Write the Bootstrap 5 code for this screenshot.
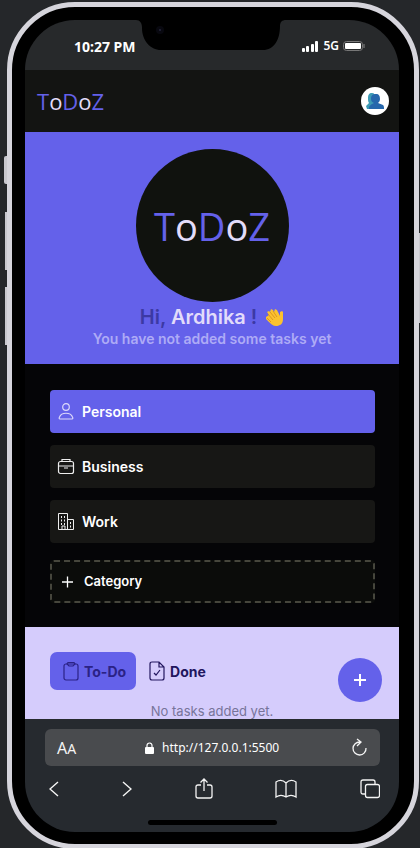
<!DOCTYPE html>
<html lang="en">
<head>
<meta charset="utf-8">
<meta name="viewport" content="width=device-width, initial-scale=1">
<title>ToDoZ</title>
<link href="https://cdn.jsdelivr.net/npm/bootstrap@5.3.0/dist/css/bootstrap.min.css" rel="stylesheet">
<style>
  :root { --violet: #6461ea; --paper: #d5ccfc; --ink: #22165e; --ui: Inter, "Noto Sans", sans-serif; --sys: "Noto Sans", sans-serif; }
  body { background: #25272a; font-family: var(--ui); padding: 2px 1px 0 7px; }
  .phone { border: 5px solid #d6d5dc; border-radius: 68px; background: #000; padding: 13px 15px 12px 13px; }
  .side-key { position: absolute; left: -7px; width: 2px; height: 58px; background: #c9c8ce; }
  .key-mute { top: 149px; left: -8px; width: 3px; height: 28px; border-radius: 2px 0 0 2px; }
  .key-up { top: 205px; }
  .key-down { top: 280px; }
  .key-power { top: 226px; left: auto; right: -6px; width: 1px; height: 90px; }
  .screen { border-radius: 50px; overflow: hidden; background: #050507; }
  .status { height: 50px; background: #27292b; color: #fff; font-family: var(--sys); padding: 2px 34px 0 49px; font-size: 14px; }
  .carrier { font-size: 12px; }
  .notch { position: absolute; top: 0; left: 111px; }
  .top-head { height: 62px; background: #131412; padding: 0 10px 0 12px; }
  .wordmark { font-family: "Open Sans", sans-serif; font-weight: 400; color: var(--violet); line-height: 1; }
  .wordmark span { color: #e2dcfa; }
  .word-sm { font-size: 22px; }
  .word-lg { font-size: 38px; }
  .avatar { width: 28px; height: 28px; }
  .hero { background: var(--violet); height: 232px; padding-top: 17px; }
  .disc { width: 153px; height: 153px; background: #10120e; }
  .greet { font-size: 20px; line-height: 24px; font-weight: 600; color: #3c39a4; margin-top: 3px; }
  .greet b { color: #e2dcfa; font-weight: 600; }
  .hero-note { font-size: 14px; line-height: 19px; font-weight: 600; color: #aeabf6; }
  .groups { padding: 26px 24px 24px 25px; }
  .group-btn { height: 43px; background: #171715; color: #fff; border: 0; border-radius: 4px; font-size: 14px; font-weight: 600; padding: 0 7px; gap: 6px; margin-bottom: 12px; }
  .group-btn.on { background: var(--violet); }
  .group-add { background: #0b0c0a; border: 2px dashed #46463c; font-size: 13px; padding: 0 6px; gap: 6px; margin: 17px 0 0; }
  .tasks { background: var(--paper); height: 92px; padding: 25px 17px 0 25px; overflow: hidden; }
  .tab-btn { height: 38px; border: 0; border-radius: 7px; background: none; color: var(--ink); font-size: 14px; font-weight: 700; padding: 0 10px 0 12px; gap: 4px; }
  .tab-btn.on { background: var(--violet); color: #2b2285; }
  .fab { width: 44px; height: 44px; margin-top: 6px; background: var(--violet); border: 0; }
  .empty-note { font-size: 13px; line-height: 18px; color: #77749a; padding-right: 8px; }
  .browser { background: #262a2f; padding: 10px 19px 7px 20px; color: #f4f4f4; font-family: var(--sys); }
  .address { height: 37px; background: #494b4e; border-radius: 6px; padding: 0 12px; }
  .url { font-size: 12px; width: 120px; color: #fff; background: none; border: 0; outline: 0; padding: 0; }
  .plain-btn { background: none; border: 0; padding: 0; color: inherit; line-height: 1; }
  .home-bar { width: 129px; height: 5px; background: #000; border-radius: 3px; }
  svg { display: block; flex: none; }
</style>
<script src="https://cdn.jsdelivr.net/npm/bootstrap@5.3.0/dist/js/bootstrap.bundle.min.js"></script>
</head>
<body>
<div class="phone position-relative">
  <i class="side-key key-mute"></i><i class="side-key key-up"></i><i class="side-key key-down"></i><i class="side-key key-power"></i>
  <div class="screen">
    <div class="status position-relative d-flex align-items-center justify-content-between">
      <svg class="notch" width="150" height="30" viewBox="0 0 150 30"><path d="M0 0h150c-4 0-6 2-6 6 0 14-6 24-17 24H25C14 30 6 20 6 8 6 3 4 0 0 0Z"/><circle cx="24" cy="10" r="4" fill="#08080f"/><circle cx="24" cy="10" r="1" fill="#25253c"/></svg>
      <strong>10:27 PM</strong>
      <div class="d-flex align-items-center gap-1">
        <svg width="17" height="11" viewBox="0 0 17 11" fill="#fff"><rect y="7" width="3" height="4" rx="1"/><rect x="4" y="5" width="3" height="6" rx="1"/><rect x="9" y="3" width="3" height="8" rx="1"/><rect x="13" width="3" height="11" rx="1"/></svg>
        <span class="carrier fw-semibold">5G</span>
        <svg width="22" height="10" viewBox="0 0 22 10"><rect x=".5" y=".5" width="19" height="9" rx="3" fill="none" stroke="#777"/><rect x="2" y="2" width="16" height="6" rx="1" fill="#fff"/><path d="M21 3v4" stroke="#888"/></svg>
      </div>
    </div>
    <header class="top-head d-flex align-items-center justify-content-between">
      <div class="wordmark word-sm">T<span>o</span>D<span>o</span>Z</div>
      <button class="plain-btn avatar rounded-circle bg-white d-flex align-items-center justify-content-center" aria-label="Account">
        <svg width="18" height="17" viewBox="0 0 18 17"><path d="M2 5c0-3 1-5 4-5 2 0 4 2 4 5s-1 4-2 5l2 2v4H1l-1-3 3-3C2 9 2 7 2 5Z" fill="#3d9bb4"/><path d="M5 6c0-4 2-5 5-5s4 2 4 5c0 2-1 3-2 4l5 2c1 1 1 2 1 4H3c0-3 1-4 5-6-2-1-3-2-3-4Z" fill="#2667ac"/></svg>
      </button>
    </header>
    <section class="hero text-center">
      <div class="disc rounded-circle mx-auto d-flex align-items-center justify-content-center"><div class="wordmark word-lg">T<span>o</span>D<span>o</span>Z</div></div>
      <div class="greet d-flex justify-content-center align-items-center"><span>Hi, <b>Ardhika</b> !</span>
        <svg class="ms-2" width="19" height="20" viewBox="0 0 19 20"><path d="M1 10 4 8 2 5l2-1 1 1 1-3 2 1 1 2 1-3 2 1 3 6V5l2-1 1 1v7c0 5-3 7-7 7-3 0-5-2-7-4L1 12Z" fill="#fbc22f"/><path d="m3 7 5 6M5 5l5 6m-2-7 4 6M2 11l4 4" stroke="#d58a20" stroke-width=".8"/></svg>
      </div>
      <div class="hero-note">You have not added some tasks yet</div>
    </section>
    <section class="groups">
      <button class="group-btn on w-100 d-flex align-items-center">
        <svg width="19" height="19" viewBox="0 0 19 19" fill="none" stroke="#dcd8fa" stroke-width="1.2"><circle cx="9" cy="5" r="3.300"/><path d="M3 17c-1 0-1-1-.5-2 2-5 11-5 13 0 .5 1 .5 2-.5 2Z"/></svg>Personal</button>
      <button class="group-btn w-100 d-flex align-items-center">
        <svg width="19" height="19" viewBox="0 0 19 19" fill="none" stroke="#eee" stroke-width="1.200"><rect x="1.500" y="4.500" width="15" height="12" rx="2"/><path d="M5 4V2.500h8V4M1.500 9h15M7 11h4"/></svg>Business</button>
      <button class="group-btn w-100 d-flex align-items-center">
        <svg width="19" height="19" viewBox="0 0 19 19" fill="none" stroke="#eee"><path d="M1.500 17.500v-16h9v16M10.500 7.500h6v10h-15"/><path d="M4.500 4v10M7.500 4v10M13.500 10v6" stroke-dasharray="2 1.500"/><path d="M5 17v-3h3v3"/></svg>Work</button>
      <button class="group-btn group-add w-100 d-flex align-items-center">
        <svg width="20" height="20" viewBox="0 0 20 20" stroke="#fff" stroke-width="1.300"><path d="M4 10h11M9.500 4.500v11"/></svg>Category</button>
    </section>
    <section class="tasks">
      <div class="d-flex align-items-start">
        <button class="tab-btn on d-flex align-items-center">
          <svg width="18" height="20" viewBox="0 0 18 20" fill="none" stroke="currentColor" stroke-width="1.200"><rect x="2" y="3" width="14" height="16" rx="2"/><path d="M6 1.500h6l1 1.500-2 2H7L5 3Z"/></svg>To-Do</button>
        <button class="tab-btn d-flex align-items-center">
          <svg width="18" height="20" viewBox="0 0 18 20" fill="none" stroke="currentColor" stroke-width="1.200"><path d="M2 3q0-2 2-2h7l5 5v11q0 2-2 2H4q-2 0-2-2ZM11 1v5h5M6 12l2 2 4-5"/></svg>Done</button>
        <button class="fab rounded-circle ms-auto p-0 d-flex align-items-center justify-content-center" aria-label="Add task">
          <svg width="12" height="12" viewBox="0 0 12 12" stroke="#fff" stroke-width="2"><path d="M0 6h12M6 0v12"/></svg></button>
      </div>
      <div class="empty-note text-center">No tasks added yet.</div>
    </section>
    <footer class="browser">
      <div class="address d-flex align-items-center justify-content-between">
        <button class="plain-btn fs-6">A<small>A</small></button>
        <label class="d-flex align-items-center gap-2">
          <svg width="9" height="12" viewBox="0 0 9 12"><rect y="5" width="9" height="7" rx="1" fill="#fff"/><path d="M2 5V3.500a2.500 2.500 0 0 1 5 0V5" fill="none" stroke="#fff" stroke-width="1.200"/></svg>
          <input class="url" type="text" value="http://127.0.0.1:5500" aria-label="Address">
        </label>
        <button class="plain-btn" aria-label="Reload"><svg width="17" height="19" viewBox="0 0 17 19" fill="none" stroke="#f4f4f4" stroke-width="1.300"><path d="M9 4a6.500 6.500 0 1 0 6 6M6 1l4 3-4 4"/></svg></button>
      </div>
      <nav class="d-flex align-items-center justify-content-between pt-2 ps-1" aria-label="Browser">
        <button class="plain-btn" aria-label="Back"><svg width="10" height="30" viewBox="0 0 10 30" fill="none" stroke="#f4f4f4" stroke-width="1.400"><path d="m9 8-8 7 8 7"/></svg></button>
        <button class="plain-btn" aria-label="Forward"><svg width="10" height="30" viewBox="0 0 10 30" fill="none" stroke="#f4f4f4" stroke-width="1.400"><path d="m1 8 8 7-8 7"/></svg></button>
        <button class="plain-btn" aria-label="Share"><svg width="18" height="24" viewBox="0 0 18 24" fill="none" stroke="#f4f4f4" stroke-width="1.300"><path d="M6 8H3q-2 0-2 2v9q0 2 2 2h12q2 0 2-2v-9q0-2-2-2h-3M9 14V2M5.500 5.500 9 2l3.500 3.500"/></svg></button>
        <button class="plain-btn" aria-label="Bookmarks"><svg width="22" height="20" viewBox="0 0 22 20" fill="none" stroke="#f4f4f4" stroke-width="1.300"><path d="M11 4C8 1 4 1 1 3v15c3-2 7-2 10 0 3-2 7-2 10 0V3c-3-2-7-2-10 1v14"/></svg></button>
        <button class="plain-btn" aria-label="Tabs"><svg width="20" height="20" viewBox="0 0 20 20" fill="none" stroke="#f4f4f4" stroke-width="1.300"><rect x="5.500" y="5.500" width="14" height="13" rx="2"/><path d="M5 15H3q-2 0-2-2V3q0-2 2-2h10q2 0 2 2v2"/></svg></button>
      </nav>
      <div class="home-bar mx-auto mt-3"></div>
    </footer>
  </div>
</div>
</body>
</html>
